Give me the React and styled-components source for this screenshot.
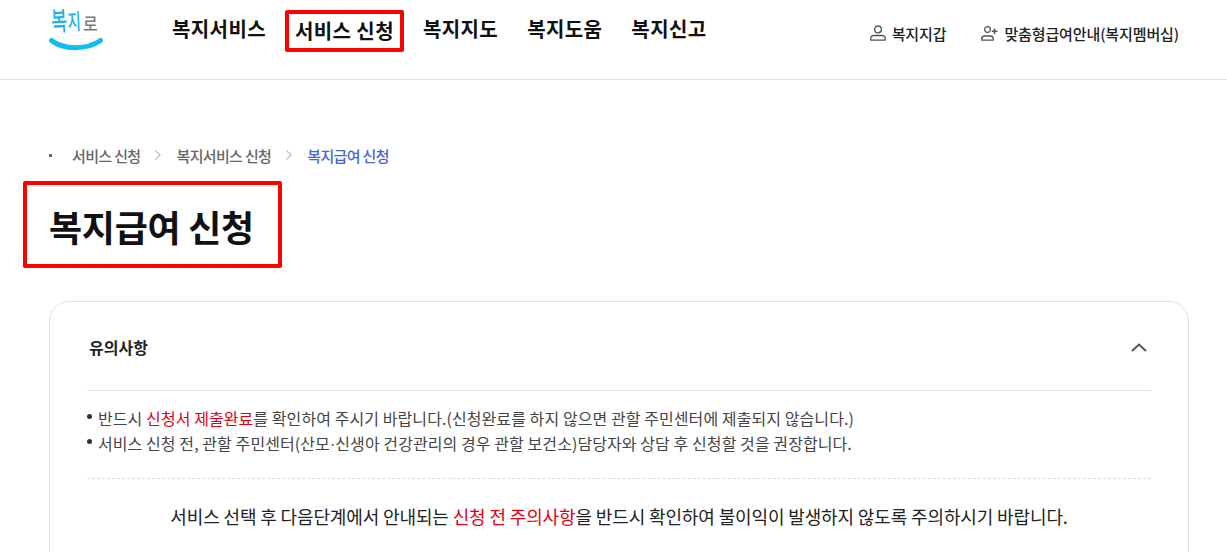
import React from 'react';
import styled, { createGlobalStyle } from 'styled-components';

const GlobalStyle = createGlobalStyle`
    html, body {
        margin: 0;
        padding: 0;
        height: 100%;
        overflow: hidden;
        background: #fff;
        font-family: "Noto Sans CJK KR", "Noto Sans", sans-serif;
    }
    * { box-sizing: border-box; }
`;

const Header = styled.header`
    display: flex;
    align-items: flex-start;
    height: 80px;
    border-bottom: 1px solid #e0e0e0;
    padding-left: 47px;
`;

const LogoLink = styled.a`
    display: block;
    width: 58px;
    height: 54px;
    margin-right: 67px;
`;

const NavList = styled.nav`
    display: flex;
    align-items: center;
    height: 60px;
`;

const NavItem = styled.a`
    display: flex;
    align-items: center;
    justify-content: center;
    height: 42px;
    margin-top: ${p => (p.$boxed ? '2px' : '-3px')};
    padding: 0 ${p => (p.$boxed ? '6px 2px' : '0')};
    margin-right: ${p => (p.$boxed ? '19px' : '29px')};
    margin-left: ${p => (p.$boxed ? '-10px' : '0')};
    border: ${p => (p.$boxed ? '4px solid #fe0000' : 'none')};
    border-radius: 2px;
    font-size: 20px;
    font-weight: 700;
    letter-spacing: 0.4px;
    color: #111;
    white-space: nowrap;
`;

const UtilList = styled.div`
    display: flex;
    align-items: center;
    gap: 35px;
    height: 66px;
    margin-left: auto;
    margin-right: 48px;
`;

const UtilItem = styled.a`
    display: flex;
    align-items: center;
    gap: 6px;
    font-size: 15px;
    font-weight: 500;
    letter-spacing: -0.12px;
    color: #222;
    white-space: nowrap;
`;

const Main = styled.main`
    padding: 63px 38px 0 49px;
`;

const Breadcrumb = styled.ol`
    display: flex;
    align-items: center;
    list-style: none;
    margin: 0;
    padding: 0;
    height: 24px;
    font-size: 15px;
    font-weight: 500;
    letter-spacing: -0.65px;
    color: #666;
`;

const Dot = styled.span`
    width: 3px;
    height: 3px;
    margin-right: 20px;
    background: #666;
`;

const Crumb = styled.li`
    color: ${p => (p.$current ? '#4a64d8' : '#666')};
    white-space: nowrap;
`;

const Chevron = styled.svg`
    width: 8px;
    height: 12px;
    margin: 0 14px;
    fill: none;
    stroke: #c4c4c4;
    stroke-width: 1.4;
`;

const TitleBox = styled.div`
    display: flex;
    align-items: center;
    width: 259px;
    height: 87px;
    margin: 14px 0 33px -26px;
    padding: 2px 0 0 22px;
    border: 4px solid #fe0000;
    border-radius: 2px;
`;

const Title = styled.h2`
    margin: 0;
    font-size: 36px;
    font-weight: 700;
    letter-spacing: -0.3px;
    color: #111;
    white-space: nowrap;
`;

const Card = styled.section`
    border: 1px solid #e0e0e0;
    border-radius: 20px;
    padding: 0 37px 60px;
`;

const CardHead = styled.div`
    display: flex;
    align-items: center;
    justify-content: space-between;
    height: 89px;
    padding: 3px 4px 0 2px;
    border-bottom: 1px solid #e0e0e0;
`;

const CardTitle = styled.h3`
    margin: -2px 0 0;
    font-size: 16px;
    font-weight: 700;
    letter-spacing: 0;
    color: #222;
`;

const Notes = styled.ul`
    list-style: none;
    margin: 0;
    padding: 15px 0 21px;
    border-bottom: 1px dashed #ddd;
`;

const Note = styled.li`
    position: relative;
    padding-left: 11px;
    font-size: 16px;
    line-height: 25px;
    letter-spacing: 0.08px;
    color: #444;
    white-space: nowrap;
    &::before {
        content: '';
        position: absolute;
        left: 0;
        top: 8px;
        width: 5px;
        height: 5px;
        border-radius: 50%;
        background: #333;
    }
`;

const Red = styled.span`
    color: #e00012;
`;

const MiddleDot = styled.span`
    font-family: "Liberation Sans", sans-serif;
`;

const Lead = styled.p`
    margin: 0;
    padding-top: 23px;
    text-align: center;
    font-size: 18px;
    line-height: 28px;
    letter-spacing: -0.13px;
    color: #222;
    white-space: nowrap;
`;

const Logo = () => (
    <svg width="58" height="54" viewBox="0 0 58 54" fontFamily="Noto Sans CJK KR">
        <text transform="translate(4.5 31) rotate(-3) scale(.8 1.2)" fontSize="22" fontWeight="500" fill="#19b5ea">복</text>
        <text transform="translate(21 30) rotate(-3) scale(.72 1.1)" fontSize="20" fontWeight="500" fill="#19b5ea">지</text>
        <text transform="translate(36 31) scale(1 1.15)" fontSize="16" fontWeight="500" fill="#77777f">로</text>
        <path d="M4.5 40.5 C16 50 40 50 53.5 40.5" fill="none" stroke="#12bdf4" strokeWidth="5" strokeLinecap="round" />
    </svg>
);

const UserIcon = () => (
    <svg width="16" height="16" viewBox="0 0 16 16" fill="none" stroke="#555" strokeWidth="1.3">
        <circle cx="8" cy="4.4" r="3.4" />
        <path d="M.8 15.2v-1.7c0-2 1.5-3 3.3-3h7.8c1.8 0 3.3 1 3.3 3v1.7z" />
    </svg>
);

const UserPlusIcon = () => (
    <svg width="17" height="15" viewBox="0 0 17 15" fill="none" stroke="#555" strokeWidth="1.3">
        <circle cx="6.5" cy="3.6" r="2.9" />
        <path d="M.7 14.2v-1.3c0-2 1.4-2.9 3-2.9h5.6c1.6 0 3 .9 3 2.9v1.3z" />
        <path d="M13.5 2.5v5.5M10.8 5.2h5.7" strokeWidth="1.6" />
    </svg>
);

const App = () => {
    const menus = ['복지서비스', '서비스 신청', '복지지도', '복지도움', '복지신고'];

    return (
        <>
            <GlobalStyle />
            <Header>
                <LogoLink><Logo /></LogoLink>
                <NavList>
                    {menus.map((menu, i) => (
                        <NavItem key={menu} $boxed={i === 1}>{menu}</NavItem>
                    ))}
                </NavList>
                <UtilList>
                    <UtilItem><UserIcon />복지지갑</UtilItem>
                    <UtilItem><UserPlusIcon />맞춤형급여안내(복지멤버십)</UtilItem>
                </UtilList>
            </Header>
            <Main>
                <Breadcrumb>
                    <Dot />
                    <Crumb>서비스 신청</Crumb>
                    <Chevron viewBox="0 0 8 12"><path d="M1.5 1.5 6 6l-4.5 4.5" /></Chevron>
                    <Crumb>복지서비스 신청</Crumb>
                    <Chevron viewBox="0 0 8 12"><path d="M1.5 1.5 6 6l-4.5 4.5" /></Chevron>
                    <Crumb $current>복지급여 신청</Crumb>
                </Breadcrumb>
                <TitleBox>
                    <Title>복지급여 신청</Title>
                </TitleBox>
                <Card>
                    <CardHead>
                        <CardTitle>유의사항</CardTitle>
                        <svg width="16" height="9" viewBox="0 0 16 9" fill="none" stroke="#555" strokeWidth="2">
                            <path d="M1 8 8 1.5 15 8" />
                        </svg>
                    </CardHead>
                    <Notes>
                        <Note>반드시 <Red>신청서 제출완료</Red>를 확인하여 주시기 바랍니다.(신청완료를 하지 않으면 관할 주민센터에 제출되지 않습니다.)</Note>
                        <Note>서비스 신청 전, 관할 주민센터(산모<MiddleDot>·</MiddleDot>신생아 건강관리의 경우 관할 보건소)담당자와 상담 후 신청할 것을 권장합니다.</Note>
                    </Notes>
                    <Lead>서비스 선택 후 다음단계에서 안내되는 <Red>신청 전 주의사항</Red>을 반드시 확인하여 불이익이 발생하지 않도록 주의하시기 바랍니다.</Lead>
                </Card>
            </Main>
        </>
    );
};

export default App;
